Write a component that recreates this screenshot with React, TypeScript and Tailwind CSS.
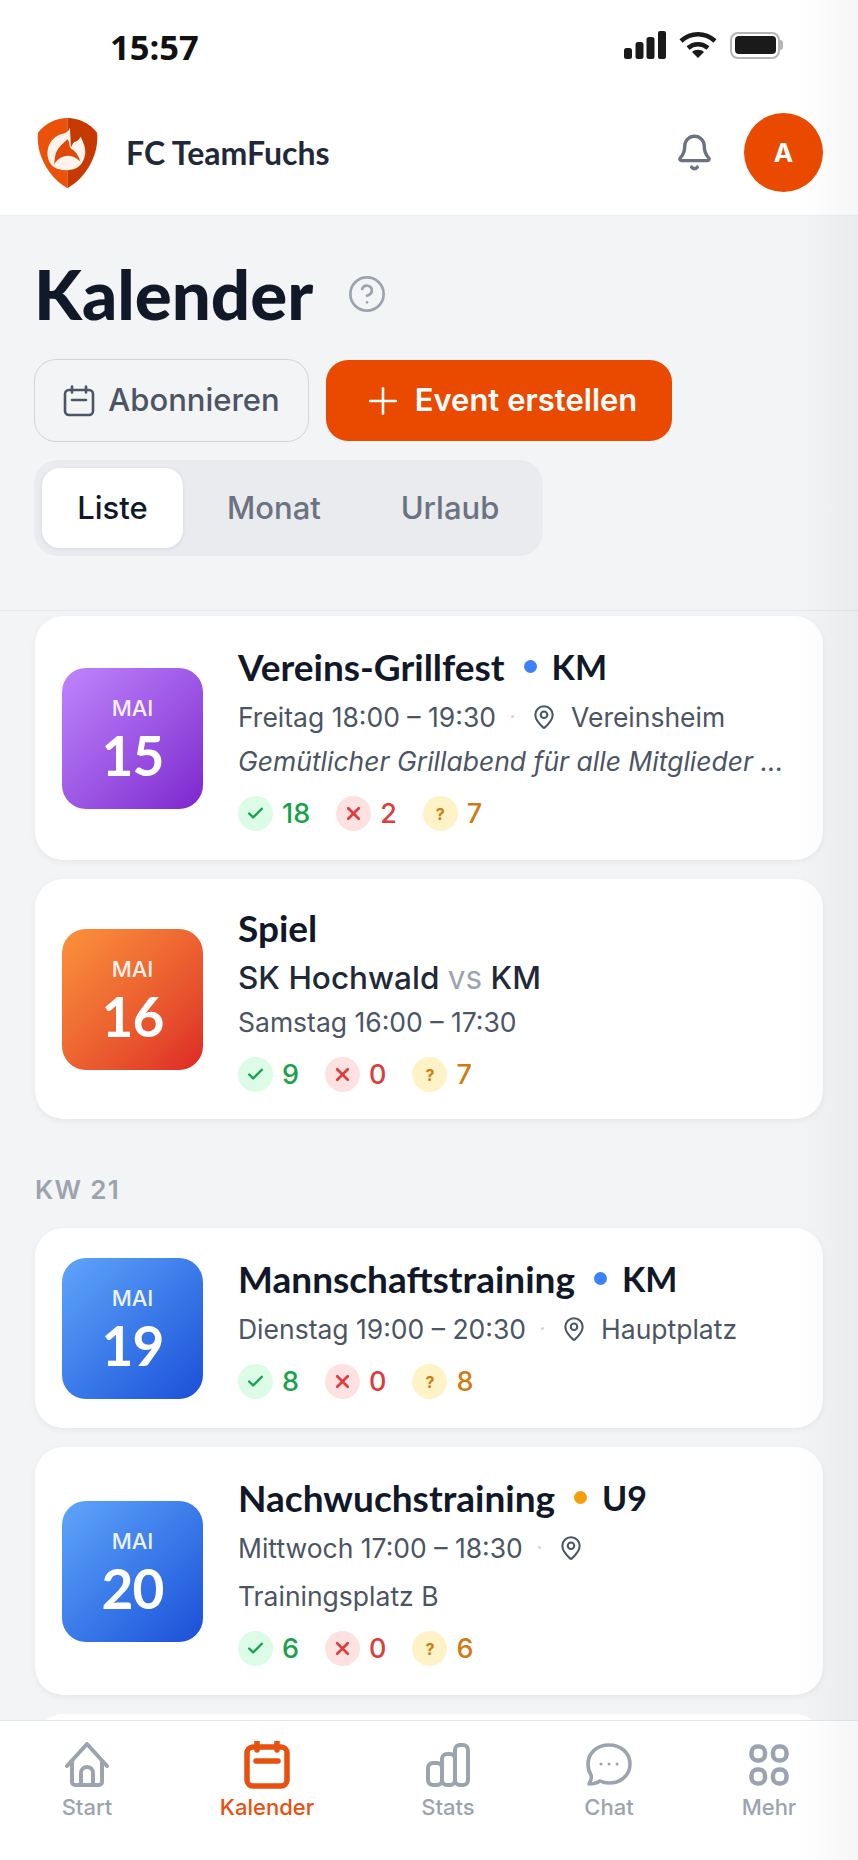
import { Bell, CircleHelp, MapPin, Plus, Check, X } from "lucide-react";

const heading = "font-['Lato',sans-serif]";

type Event = {
  month: string;
  day: string;
  tile: string;
  title: string;
  dot?: string;
  team?: string;
  match?: boolean;
  time: string;
  place?: string;
  wrapPlace?: boolean;
  note?: string;
  yes: number;
  no: number;
  maybe: number;
  height: string;
};

const purple = "bg-gradient-to-br from-[#c084fc] to-[#7e22ce]";
const orange = "bg-gradient-to-br from-[#fb923c] to-[#dc2626]";
const blue = "bg-gradient-to-br from-[#60a5fa] to-[#1d4ed8]";

function Logo() {
  return (
    <svg width="62" height="72" viewBox="24 22 190 220" className="ml-[1px]">
      <path d="M117 25C85 25 50 40 27 70c-7 60 28 135 90 170z" fill="#ea5209" />
      <path d="M117 25c33 0 68 15 91 45 7 60-28 135-91 170z" fill="#c63a02" />
      <path
        d="M125 55c-7 20-25 17-37 23-28 14-36 47-30 70 4 17 17 30 34 34 18 6 43 3 58-7 10-7 22-25 22-47 0-16-7-30-14-46-6 10-12 16-20 16-6 6-8 14-10 17z"
        fill="#fff3ec"
      />
      <path
        d="M118 90c-18 15-34 30-38 50-2 10-2 18-4 28 16-28 49-40 81-10-5-18-15-32-29-40-6-6-3-18-10-28z"
        fill="#e0480a"
      />
    </svg>
  );
}

function StatusIcons() {
  return (
    <div className="flex items-center gap-[13px]">
      <svg width="42" height="28" viewBox="0 0 42 28" fill="#1a1a1a">
        <rect x="0" y="17" width="8" height="11" rx="2.5" />
        <rect x="11.5" y="11" width="8" height="17" rx="2.5" />
        <rect x="22.5" y="6" width="8" height="22" rx="2.5" />
        <rect x="34" y="0" width="8" height="28" rx="2" />
      </svg>
      <svg width="38" height="28" viewBox="0 0 38 28" fill="none" stroke="#1a1a1a" strokeWidth="4.5">
        <path d="M2 10c10-9 24-9 34 0" />
        <path d="M9 17c6-5 14-5 20 0" />
        <path d="M13 21l6 6 6-6c-3-3-9-3-12 0z" fill="#1a1a1a" stroke="none" />
      </svg>
      <div className="flex items-center">
        <div className="flex h-[27px] w-[50px] items-center justify-center rounded-[8px] border-[2.5px] border-[#b5b5b5]">
          <div className="h-[18px] w-[41px] rounded-[4px] bg-[#1a1a1a]" />
        </div>
        <div className="h-[10px] w-[3px] rounded-r-full bg-[#b5b5b5]" />
      </div>
    </div>
  );
}

function Rsvp({ yes, no, maybe }: { yes: number; no: number; maybe: number }) {
  return (
    <div className="flex items-center gap-[26px] font-['Inter',sans-serif] text-[27px] leading-[36px] font-medium">
      <div className="flex items-center gap-[9px] text-[#16a34a]">
        <span className="flex size-[35px] items-center justify-center rounded-full bg-[#dcfce7]">
          <Check size={19} strokeWidth={3} />
        </span>
        {yes}
      </div>
      <div className="flex items-center gap-[9px] text-[#dc3c3c]">
        <span className="flex size-[35px] items-center justify-center rounded-full bg-[#fee2e2]">
          <X size={21} strokeWidth={3} />
        </span>
        {no}
      </div>
      <div className="flex items-center gap-[9px] text-[#d07a12]">
        <span className="flex size-[35px] items-center justify-center rounded-full bg-[#fef3c7] text-[16px] font-bold">?</span>
        {maybe}
      </div>
    </div>
  );
}

function EventCard({ ev }: { ev: Event }) {
  return (
    <div className={`flex items-center gap-[35px] rounded-[28px] bg-white pr-[28px] pl-[27px] shadow-[0_2px_6px_rgba(0,0,0,0.06)] ${ev.height}`}>
      <div className={`flex size-[141px] shrink-0 flex-col items-center justify-center rounded-[24px] text-white ${ev.tile}`}>
        <div className="mt-[2px] font-['Inter',sans-serif] text-[22px] leading-[24px] font-medium opacity-90">{ev.month}</div>
        <div className={`${heading} mt-[8px] text-[55px] leading-[54px] font-bold tracking-[-1px]`}>{ev.day}</div>
      </div>
      <div className="min-w-0 flex-1">
        <div className={`${heading} flex items-center text-[37px] leading-[44px] font-bold text-[#111827]`}>
          {ev.title}
          {ev.dot && <span className={`mr-[15px] ml-[19px] size-[13px] rounded-full ${ev.dot}`} />}
          {ev.team && <span className="text-[34px]">{ev.team}</span>}
        </div>
        {ev.match && (
          <div className="mt-[6px] font-['Inter',sans-serif] text-[31.5px] leading-[44px] font-medium text-[#1f2937]">
            SK Hochwald <span className="font-normal text-[#9ca3af]">vs</span> KM
          </div>
        )}
        <div className={`flex items-center font-['Inter',sans-serif] text-[26.5px] leading-[40px] text-[#4b5563] ${ev.match ? "mt-[2px]" : "mt-[8px]"}`}>
          {ev.time}
          {ev.place !== undefined && (
            <>
              <span className="mr-[17px] ml-[15px] size-[3px] rounded-full bg-[#d1d5db]" />
              <MapPin size={26} strokeWidth={1.9} className="mr-[14px]" />
              {!ev.wrapPlace && ev.place}
            </>
          )}
        </div>
        {ev.wrapPlace && (
          <div className="mt-[8px] font-['Inter',sans-serif] text-[26.5px] leading-[40px] text-[#4b5563]">{ev.place}</div>
        )}
        {ev.note && (
          <div className="mt-[4px] truncate font-['Inter',sans-serif] text-[26.5px] leading-[40px] text-[#4b5563] italic">{ev.note}</div>
        )}
        <div className="mt-[15px]">
          <Rsvp yes={ev.yes} no={ev.no} maybe={ev.maybe} />
        </div>
      </div>
    </div>
  );
}

function NavItem({ label, active, children }: { label: string; active?: boolean; children: React.ReactNode }) {
  return (
    <div className={`flex flex-col items-center font-['Inter',sans-serif] text-[22px] leading-[28px] font-medium ${active ? "text-[#e8500f]" : "text-[#9ca3af]"}`}>
      <div className="flex h-[46px] items-center justify-center">{children}</div>
      <div className="mt-[5px]">{label}</div>
    </div>
  );
}

const events: Event[] = [
  {
    month: "MAI", day: "15", tile: purple, title: "Vereins-Grillfest", dot: "bg-[#3b82f6]", team: "KM",
    time: "Freitag 18:00 – 19:30", place: "Vereinsheim", note: "Gemütlicher Grillabend für alle Mitglieder ...",
    yes: 18, no: 2, maybe: 7, height: "h-[244px]",
  },
  {
    month: "MAI", day: "16", tile: orange, title: "Spiel", match: true,
    time: "Samstag 16:00 – 17:30", yes: 9, no: 0, maybe: 7, height: "h-[240px]",
  },
];

const events2: Event[] = [
  {
    month: "MAI", day: "19", tile: blue, title: "Mannschaftstraining", dot: "bg-[#3b82f6]", team: "KM",
    time: "Dienstag 19:00 – 20:30", place: "Hauptplatz", yes: 8, no: 0, maybe: 8, height: "h-[200px]",
  },
  {
    month: "MAI", day: "20", tile: blue, title: "Nachwuchstraining", dot: "bg-[#f59e0b]", team: "U9",
    time: "Mittwoch 17:00 – 18:30", place: "Trainingsplatz B", wrapPlace: true, yes: 6, no: 0, maybe: 6, height: "h-[248px]",
  },
];

export default function App() {
  return (
    <div className="relative flex h-[1860px] w-[858px] flex-col overflow-hidden bg-[#f3f4f6] font-['Inter',sans-serif]">
      <div className="flex h-[96px] items-start justify-between bg-white pt-[25px] pr-[75px] pl-[110px]">
        <span className="font-['Open_Sans',sans-serif] text-[34.5px] leading-[44px] font-bold text-[#111]">15:57</span>
        <div className="pt-[6px]">
          <StatusIcons />
        </div>
      </div>
      <header className="flex h-[120px] items-center justify-between border-b border-[#eceef0] bg-white pr-[35px] pb-[6px] pl-[36px]">
        <div className="flex items-center gap-[27px]">
          <Logo />
          <span className={`${heading} text-[32px] font-bold text-[#1f2937]`}>FC TeamFuchs</span>
        </div>
        <div className="flex items-center gap-[30px]">
          <Bell size={39} strokeWidth={2.1} className="text-[#6b7280]" />
          <div className="flex size-[79px] items-center justify-center rounded-full bg-[#ea4a00] text-[26px] font-bold text-white">A</div>
        </div>
      </header>

      <div className="h-[395px] border-b border-[#e5e7eb] px-[34px] pt-[42px]">
        <div className="flex items-center gap-[34px]">
          <h1 className={`${heading} text-[69px] leading-[72px] font-black text-[#111827]`}>Kalender</h1>
          <CircleHelp size={40} strokeWidth={1.6} className="text-[#9ca3af]" />
        </div>
        <div className="mt-[29px] flex items-center gap-[17px]">
          <button className="flex h-[83px] w-[275px] items-center justify-center gap-[13px] rounded-[22px] border border-[#d1d5db] text-[31px] font-medium text-[#4b5563]">
            <svg width="32" height="32" viewBox="0 0 32 32" fill="none" stroke="currentColor" strokeWidth="2.6" strokeLinecap="round">
              <rect x="2" y="5" width="28" height="25" rx="4" />
              <path d="M9 1.5v6M23 1.5v6M9 15h14" />
            </svg>
            Abonnieren
          </button>
          <button className="flex h-[81px] w-[346px] items-center justify-center gap-[10px] rounded-[22px] bg-[#ea4a00] text-[31px] font-semibold text-white">
            <Plus size={44} strokeWidth={1.4} />
            Event erstellen
          </button>
        </div>
        <div className="mt-[18px] flex h-[96px] w-[509px] items-center rounded-[24px] bg-[#e9ebee] p-[8px] text-[31px] font-medium text-[#6b7280]">
          <div className="flex h-[80px] w-[141px] items-center justify-center rounded-[18px] bg-white text-[#111827] shadow-[0_1px_4px_rgba(0,0,0,0.08)]">Liste</div>
          <div className="w-[182px] text-center">Monat</div>
          <div className="w-[170px] text-center">Urlaub</div>
        </div>
      </div>

      <div className="flex flex-1 flex-col overflow-hidden px-[35px] pt-[5px]">
        <div className="flex flex-col gap-[19px]">
          {events.map((ev) => (
            <EventCard key={ev.day} ev={ev} />
          ))}
        </div>
        <div className="mt-[57px] mb-[24px] h-[28px] text-[26px] leading-[28px] font-semibold tracking-[0.05em] text-[#9ca3af]">KW 21</div>
        <div className="flex flex-col gap-[19px]">
          {events2.map((ev) => (
            <EventCard key={ev.day} ev={ev} />
          ))}
          <div className="h-[100px] rounded-[28px] bg-white" />
        </div>
      </div>

      <nav className="grid h-[140px] grid-cols-[174px_186px_176px_146px_174px] items-start border-t border-[#e5e7eb] bg-white pt-[21px]">
        <NavItem label="Start">
          <svg width="46" height="46" viewBox="0 0 46 46" fill="none" stroke="currentColor" strokeWidth="4" strokeLinejoin="round" strokeLinecap="round">
            <path d="M3 24L23 2l20 22" />
            <path d="M8 20v20a3 3 0 0 0 3 3h24a3 3 0 0 0 3-3V20" />
            <path d="M17 43V31a6 6 0 0 1 12 0v12" />
          </svg>
        </NavItem>
        <NavItem label="Kalender" active>
          <svg width="46" height="48" viewBox="0 0 46 48" fill="none" stroke="#e8500f" strokeWidth="5.5" strokeLinecap="round">
            <rect x="3" y="6" width="40" height="39" rx="6" />
            <path d="M13 1v8M33 1v8M12 20h22" />
          </svg>
        </NavItem>
        <NavItem label="Stats">
          <svg width="46" height="46" viewBox="0 0 46 46" fill="none" stroke="currentColor" strokeWidth="4">
            <rect x="3" y="21" width="14" height="22" rx="5" />
            <rect x="17" y="12" width="13" height="31" rx="5" />
            <rect x="30" y="3" width="13" height="40" rx="5" />
          </svg>
        </NavItem>
        <NavItem label="Chat">
          <svg width="46" height="46" viewBox="0 0 46 46" fill="none" stroke="currentColor" strokeWidth="3.6" strokeLinejoin="round">
            <path d="M23 3c12 0 21 8 21 19s-9 19-21 19c-3 0-7-1-9-2-3 2-7 3-11 3 2-3 3-5 2-9-2-3-3-7-3-11C2 11 11 3 23 3z" />
            <circle cx="15" cy="22" r="1.5" fill="currentColor" stroke="none" />
            <circle cx="23" cy="22" r="1.5" fill="currentColor" stroke="none" />
            <circle cx="31" cy="22" r="1.5" fill="currentColor" stroke="none" />
          </svg>
        </NavItem>
        <NavItem label="Mehr">
          <svg width="40" height="42" viewBox="0 0 40 42" fill="none" stroke="currentColor" strokeWidth="4.5">
            <rect x="2.5" y="2.5" width="13.5" height="14" rx="6" />
            <rect x="24" y="2.5" width="13.5" height="14" rx="6" />
            <rect x="2.5" y="25.5" width="13.5" height="14" rx="6" />
            <rect x="24" y="25.5" width="13.5" height="14" rx="6" />
          </svg>
        </NavItem>
      </nav>

      <div className="pointer-events-none absolute inset-y-0 right-0 w-[60px] bg-gradient-to-r from-transparent to-[rgba(0,0,0,0.035)]" />
    </div>
  );
}
